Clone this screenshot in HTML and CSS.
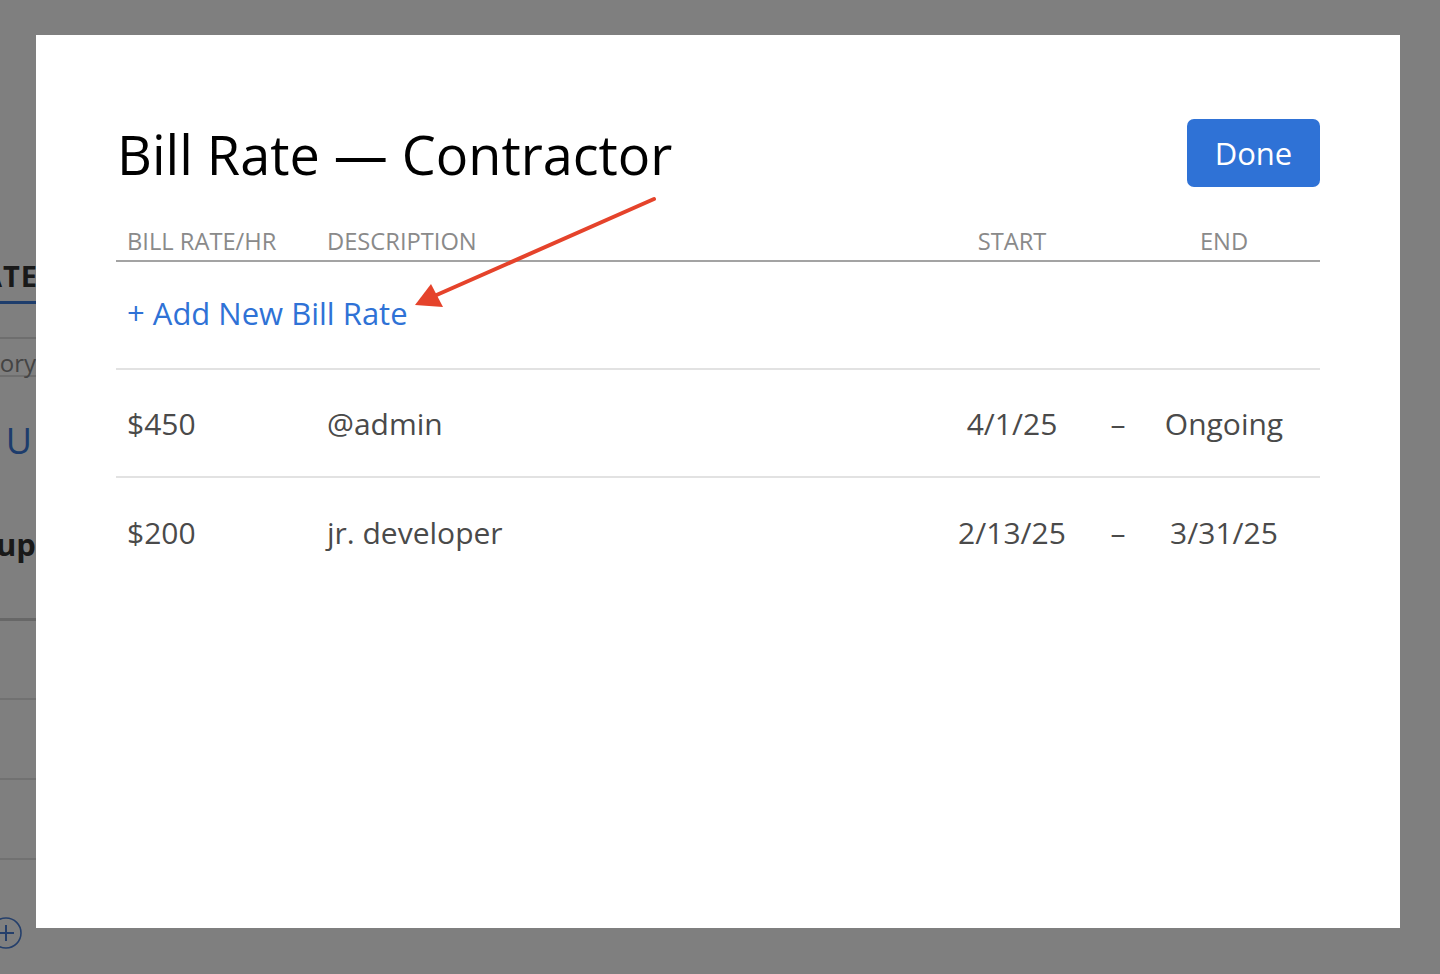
FILE: index.html
```html
<!DOCTYPE html>
<html lang="en">
<head>
<meta charset="utf-8">
<title>Bill Rate — Contractor</title>
<link rel="stylesheet" href="styles.css">
</head>
<body>
<div class="page">
  <div class="page-tab"><span class="tab-label">BILL RATE</span></div>
  <div class="page-filter"><span>History</span></div>
  <div class="page-user"><span>U</span></div>
  <div class="page-group"><span>Group</span></div>
  <div class="page-rows">
    <div class="page-row first"></div>
    <div class="page-row"></div>
    <div class="page-row"></div>
    <div class="page-row"></div>
  </div>
  <div class="page-add">
    <svg width="32" height="32" viewBox="0 0 32 32"><circle cx="16" cy="16" r="15" fill="none" stroke="#4a7fd6" stroke-width="1.6"/><path d="M16 8v16M8 16h16" stroke="#4a7fd6" stroke-width="2"/></svg>
  </div>
</div>

<div class="backdrop"></div>

<div class="modal">
  <div class="modal-header">
    <h1 class="modal-title">Bill Rate — Contractor</h1>
    <button class="btn-done">Done</button>
  </div>
  <div class="rates">
    <div class="rate-row rate-head">
      <div class="cell">BILL RATE/HR</div>
      <div class="cell">DESCRIPTION</div>
      <div class="cell center">START</div>
      <div class="cell center"></div>
      <div class="cell center">END</div>
    </div>
    <div class="rate-row add-row">
      <div class="cell add-link">+ Add New Bill Rate</div>
    </div>
    <div class="rate-row">
      <div class="cell">$450</div>
      <div class="cell">@admin</div>
      <div class="cell center">4/1/25</div>
      <div class="cell center">–</div>
      <div class="cell center">Ongoing</div>
    </div>
    <div class="rate-row last">
      <div class="cell">$200</div>
      <div class="cell">jr. developer</div>
      <div class="cell center">2/13/25</div>
      <div class="cell center">–</div>
      <div class="cell center">3/31/25</div>
    </div>
  </div>
</div>

<svg class="annotation" width="1440" height="974" viewBox="0 0 1440 974">
  <line x1="654" y1="199" x2="432" y2="297" stroke="#e5432b" stroke-width="4" stroke-linecap="round"/>
  <polygon points="415,305 431,284 443,307" fill="#e5432b"/>
</svg>
</body>
</html>
```

FILE: styles.css
```css
* { box-sizing: border-box; }

html, body {
  margin: 0;
  padding: 0;
  width: 1440px;
  height: 974px;
  overflow: hidden;
  background: #ffffff;
  font-family: "Open Sans", "Noto Sans", sans-serif;
}

/* underlying page (only a sliver is visible) */
.page {
  width: 36px;
  height: 974px;
  overflow: hidden;
  display: flex;
  flex-direction: column;
}
.page-tab {
  margin-top: 252px;
  height: 52px;
  display: flex;
  justify-content: flex-end;
  align-items: flex-start;
  border-bottom: 3px solid #3d7bd8;
  white-space: nowrap;
}
.tab-label {
  font-size: 29px;
  font-weight: 700;
  line-height: 48px;
  color: #333;
  letter-spacing: 1px;
  margin-right: -2px;
}
.page-filter {
  margin-top: 33px;
  height: 40px;
  padding-top: 10px;
  border-top: 2px solid #dcdcdc;
  border-bottom: 2px solid #dcdcdc;
  display: flex;
  justify-content: flex-end;
  align-items: center;
  white-space: nowrap;
  font-size: 24px;
  color: #888;
}
.page-user {
  margin-top: 38px;
  height: 50px;
  display: flex;
  justify-content: flex-end;
  align-items: center;
  padding-right: 4px;
  font-size: 36px;
  color: #3a78d8;
}
.page-group {
  margin-top: 59px;
  height: 40px;
  display: flex;
  justify-content: flex-end;
  align-items: center;
  white-space: nowrap;
  font-size: 31px;
  font-weight: 700;
  color: #333;
}
.page-rows {
  margin-top: 54px;
  display: flex;
  flex-direction: column;
}
.page-row {
  height: 80px;
  border-top: 2px solid #e3e3e3;
}
.page-row.first { border-top: 3px solid #cfcfcf; }
.page-add {
  margin-top: -21px;
  margin-left: -10px;
}
.page-add svg { display: block; }

.backdrop {
  position: fixed;
  inset: 0;
  background: rgba(0, 0, 0, 0.5);
}

/* modal */
.modal {
  position: fixed;
  left: 36px;
  top: 35px;
  width: 1364px;
  height: 893px;
  background: #ffffff;
  padding: 84px 80px 0 80px;
}
.modal-header {
  display: flex;
  justify-content: space-between;
  align-items: center;
  height: 68px;
}
.modal-title {
  margin: 0 0 0 1px;
  font-size: 54px;
  font-weight: 500;
  line-height: 68px;
  color: #000;
  position: relative;
  top: 1px;
}
.btn-done {
  width: 133px;
  height: 68px;
  border: none;
  border-radius: 7px;
  background: #2f72d6;
  color: #fff;
  font-family: inherit;
  font-size: 31px;
  font-weight: 500;
  padding: 0;
}

.rates {
  margin-top: 39px;
  display: flex;
  flex-direction: column;
}
.rate-row {
  display: grid;
  grid-template-columns: 200px 1fr 192px 20px 192px;
  align-items: center;
  height: 108px;
  border-bottom: 2px solid #e2e2e2;
  font-size: 30px;
  color: #4a4a4a;
}
.rate-row.last { border-bottom: none; }
.cell {
  padding-left: 11px;
  white-space: nowrap;
}
.cell.center {
  padding-left: 0;
  text-align: center;
}
.rate-head {
  height: 36px;
  align-items: start;
  border-bottom: 2px solid #a3a3a3;
  font-size: 23.7px;
  line-height: 30px;
  color: #8a8a8a;
}
.add-row {
  height: 108px;
  padding-bottom: 4px;
}
.add-link {
  grid-column: 1 / 3;
  color: #2f72d6;
  font-size: 31px;
  font-weight: 500;
}

.annotation {
  position: fixed;
  left: 0;
  top: 0;
  pointer-events: none;
}
```
